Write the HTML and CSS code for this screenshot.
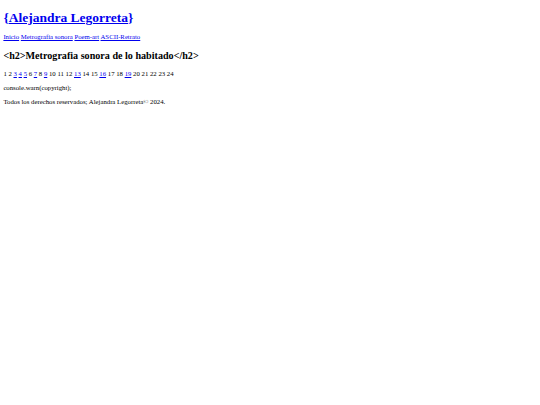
FILE: index.html
```html
<!DOCTYPE html>
<html lang="es">
<head>
<meta charset="utf-8">
<title>Alejandra Legorreta</title>
<link rel="stylesheet" href="styles.css">
</head>
<body>
<header class="site-header">
<h1 class="site-title">{<a href="#">Alejandra Legorreta</a>}</h1>
<nav class="site-nav">
<a href="#">Inicio</a>
<a href="#">Metrografía sonora</a>
<a href="#">Poem-art</a>
<a href="#">ASCII-Retrato</a>
</nav>
</header>
<main>
<h2 class="page-title">&lt;h2&gt;Metrografia sonora de lo habitado&lt;/h2&gt;</h2>
<p class="pager">1 2 <a href="#">3</a> <a href="#">4</a> <a href="#">5</a> 6 <a href="#">7</a> 8 <a href="#">9</a> 10 11 12 <a href="#">13</a> 14 15 <a href="#">16</a> 17 18 <a href="#">19</a> 20 21 22 23 24</p>
<p class="code">console.warn(copyright);</p>
</main>
<footer>
<p class="copy">Todos los derechos reservados; Alejandra Legorreta© 2024.</p>
</footer>
</body>
</html>
```
FILE: styles.css
```css
html { background: #fff; }
body {
  margin: 3.375px;
  font-family: "Liberation Serif", "Times New Roman", serif;
  font-size: 6.75px;
  color: #000;
}
a { color: #0000ee; }
.site-title {
  font-size: 13.5px;
  margin: 7px 0;
  font-weight: bold;
  color: #0000ee;
}
.site-nav { margin: 0; }
.page-title {
  font-size: 10.125px;
  font-weight: bold;
  margin: 9.4px 0;
}
.pager, .code, .copy { margin: 6.75px 0; }
```
